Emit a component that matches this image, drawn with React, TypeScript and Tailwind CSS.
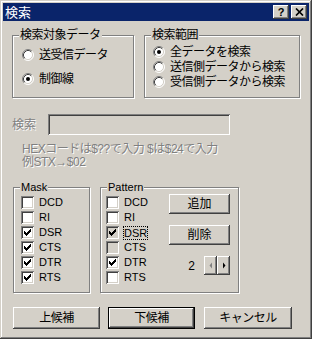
import React from "react";

const raised =
  "shadow-[inset_-1px_-1px_0_#404040,inset_1px_1px_0_#fff,inset_-2px_-2px_0_#808080,inset_2px_2px_0_#D4D0C8]";
const sunken =
  "shadow-[inset_1px_1px_0_#808080,inset_-1px_-1px_0_#fff,inset_2px_2px_0_#404040,inset_-2px_-2px_0_#D4D0C8]";
const disabledText = "text-[#808080] [text-shadow:1px_1px_0_#fff]";

function Radio({ checked }: { checked?: boolean }) {
  return (
    <svg width="12" height="12" viewBox="0 0 12 12" className="shrink-0">
      <circle cx="6" cy="6" r="5" fill="#fff" />
      <path d="M2.11 9.89A5.5 5.5 0 0 1 9.89 2.11" stroke="#808080" fill="none" />
      <path d="M9.89 2.11A5.5 5.5 0 0 1 2.11 9.89" stroke="#fff" fill="none" />
      <path d="M2.82 9.18A4.5 4.5 0 0 1 9.18 2.82" stroke="#404040" fill="none" />
      <path d="M9.18 2.82A4.5 4.5 0 0 1 2.82 9.18" stroke="#D4D0C8" fill="none" />
      {checked && <circle cx="6" cy="6" r="2" fill="#000" />}
    </svg>
  );
}

function Check({ checked, gray }: { checked?: boolean; gray?: boolean }) {
  return (
    <div className={`w-[13px] h-[13px] shrink-0 ${gray ? "bg-[#D4D0C8]" : "bg-white"} ${sunken}`}>
      {checked && (
        <svg width="13" height="13" viewBox="0 0 13 13" shapeRendering="crispEdges">
          <g fill="#000" transform="translate(3 3)">
            <rect x="6" y="0" width="1" height="1" />
            <rect x="5" y="1" width="2" height="1" />
            <rect x="0" y="2" width="1" height="1" />
            <rect x="4" y="2" width="3" height="1" />
            <rect x="0" y="3" width="2" height="1" />
            <rect x="3" y="3" width="3" height="1" />
            <rect x="0" y="4" width="5" height="1" />
            <rect x="1" y="5" width="3" height="1" />
            <rect x="2" y="6" width="1" height="1" />
          </g>
        </svg>
      )}
    </div>
  );
}

function Group({
  title,
  className,
  children,
}: {
  title: string;
  className: string;
  children: React.ReactNode;
}) {
  return (
    <fieldset
      className={`border border-[#808080] shadow-[1px_1px_0_#fff,inset_1px_1px_0_#fff] ${className}`}
    >
      <legend className="ml-[6px] px-px leading-[14px] bg-[#D4D0C8]">{title}</legend>
      {children}
    </fieldset>
  );
}

function Btn({
  label,
  className,
  isDefault,
}: {
  label: string;
  className: string;
  isDefault?: boolean;
}) {
  if (isDefault) {
    return (
      <div className={`border border-black ${className}`}>
        <div className={`w-full h-full flex items-center justify-center ${raised}`}>{label}</div>
      </div>
    );
  }
  return (
    <div className={`flex items-center justify-center ${raised} ${className}`}>{label}</div>
  );
}

export default function App() {
  const mask = [
    { name: "DCD", on: false },
    { name: "RI", on: false },
    { name: "DSR", on: true },
    { name: "CTS", on: true },
    { name: "DTR", on: true },
    { name: "RTS", on: true },
  ];
  const pattern = [
    { name: "DCD", on: false },
    { name: "RI", on: false },
    { name: "DSR", on: true, gray: true, focus: true },
    { name: "CTS", on: false, gray: true },
    { name: "DTR", on: true },
    { name: "RTS", on: false },
  ];

  return (
    <div className="w-[312px] h-[339px] bg-[#D4D0C8] p-[3px] shadow-[inset_-1px_-1px_0_#404040,inset_1px_1px_0_#D4D0C8,inset_-2px_-2px_0_#808080,inset_2px_2px_0_#fff] font-['Liberation_Sans','Noto_Sans_CJK_JP',sans-serif] text-[12px] text-black select-none">
      {/* title bar */}
      <div className="h-[18px] bg-[#0A246A] flex items-center px-[2px]">
        <span className="text-white text-[13px] leading-none">検索</span>
        <div className="ml-auto flex gap-[2px]">
          <div className={`w-[16px] h-[14px] bg-[#D4D0C8] text-black flex items-center justify-center font-bold text-[11px] leading-none ${raised}`}>
            ?
          </div>
          <div className={`w-[16px] h-[14px] bg-[#D4D0C8] flex items-center justify-center ${raised}`}>
            <svg width="9" height="8" viewBox="0 0 9 8">
              <path d="M1 0.5L8 7.5M8 0.5L1 7.5" stroke="#000" strokeWidth="1.7" />
            </svg>
          </div>
        </div>
      </div>

      <div className="px-[9px]">
        {/* search target / range */}
        <div className="mt-[7px] flex gap-[10px] tracking-[-0.5px]">
          <Group title="検索対象データ" className="w-[122px] h-[70px]">
            <div className="pl-[9px] pt-[5px] flex flex-col gap-[8px]">
              <div className="h-[16px] flex items-center gap-[5px]">
                <Radio />
                <span>送受信データ</span>
              </div>
              <div className="h-[16px] flex items-center gap-[5px]">
                <Radio checked />
                <span>制御線</span>
              </div>
            </div>
          </Group>
          <Group title="検索範囲" className="w-[156px] h-[70px]">
            <div className="pl-[8px] pt-[3px] flex flex-col gap-px">
              <div className="h-[14px] flex items-center gap-[5px]">
                <Radio checked />
                <span>全データを検索</span>
              </div>
              <div className="h-[14px] flex items-center gap-[5px]">
                <Radio />
                <span>送信側データから検索</span>
              </div>
              <div className="h-[14px] flex items-center gap-[5px]">
                <Radio />
                <span>受信側データから検索</span>
              </div>
            </div>
          </Group>
        </div>

        {/* search input */}
        <div className="mt-[16px] flex items-center">
          <span className={`w-[36px] ${disabledText}`}>検索</span>
          <div className={`h-[21px] w-[182px] bg-[#D4D0C8] ${sunken}`} />
        </div>

        {/* hint */}
        <div className={`mt-[8px] pl-[10px] leading-[13px] tracking-[-0.5px] ${disabledText}`}>
          <div>HEXコードは$??で入力 $は$24で入力</div>
          <div>例STX→$02</div>
        </div>

        {/* mask / pattern */}
        <div className="mt-[11px] pl-px flex gap-[10px] text-[11px]">
          <Group title="Mask" className="w-[77px] h-[113px]">
            <div className="pl-[7px] pt-px flex flex-col">
              {mask.map((m) => (
                <div key={m.name} className="h-[15px] flex items-center gap-[5px]">
                  <Check checked={m.on} />
                  <span>{m.name}</span>
                </div>
              ))}
            </div>
          </Group>
          <Group title="Pattern" className="w-[139px] h-[113px]">
            <div className="flex">
              <div className="pl-[5px] pt-px flex flex-col">
                {pattern.map((p) => (
                  <div key={p.name} className="h-[15px] flex items-center gap-[5px]">
                    <Check checked={p.on} gray={p.gray} />
                    <span className={p.focus ? "outline outline-1 outline-dotted outline-black leading-[12px]" : ""}>
                      {p.name}
                    </span>
                  </div>
                ))}
              </div>
              <div className="ml-auto pr-[8px] flex flex-col items-end text-[12px]">
                <Btn label="追加" className="w-[61px] h-[20px]" />
                <Btn label="削除" className="w-[61px] h-[20px] mt-[11px]" />
                <div className="mt-[11px] h-[19px] flex items-center">
                  <span className="mr-[9px]">2</span>
                  <div className={`w-[13px] h-[19px] flex items-center justify-center ${raised}`}>
                    <svg width="4" height="7" viewBox="0 0 4 7">
                      <path d="M3 0.5L0.5 3.5L3 6.5Z" fill="#808080" />
                    </svg>
                  </div>
                  <div className={`w-[13px] h-[19px] flex items-center justify-center ${raised}`}>
                    <svg width="4" height="7" viewBox="0 0 4 7">
                      <path d="M1 0.5L3.5 3.5L1 6.5Z" fill="#000" />
                    </svg>
                  </div>
                </div>
              </div>
            </div>
          </Group>
        </div>

        {/* bottom buttons */}
        <div className="mt-[14px] pl-px flex tracking-[-0.5px]">
          <Btn label="上候補" className="w-[87px] h-[22px]" />
          <Btn label="下候補" className="w-[87px] h-[22px] ml-[8px]" isDefault />
          <Btn label="キャンセル" className="w-[88px] h-[22px] ml-[9px]" />
        </div>
      </div>
    </div>
  );
}
